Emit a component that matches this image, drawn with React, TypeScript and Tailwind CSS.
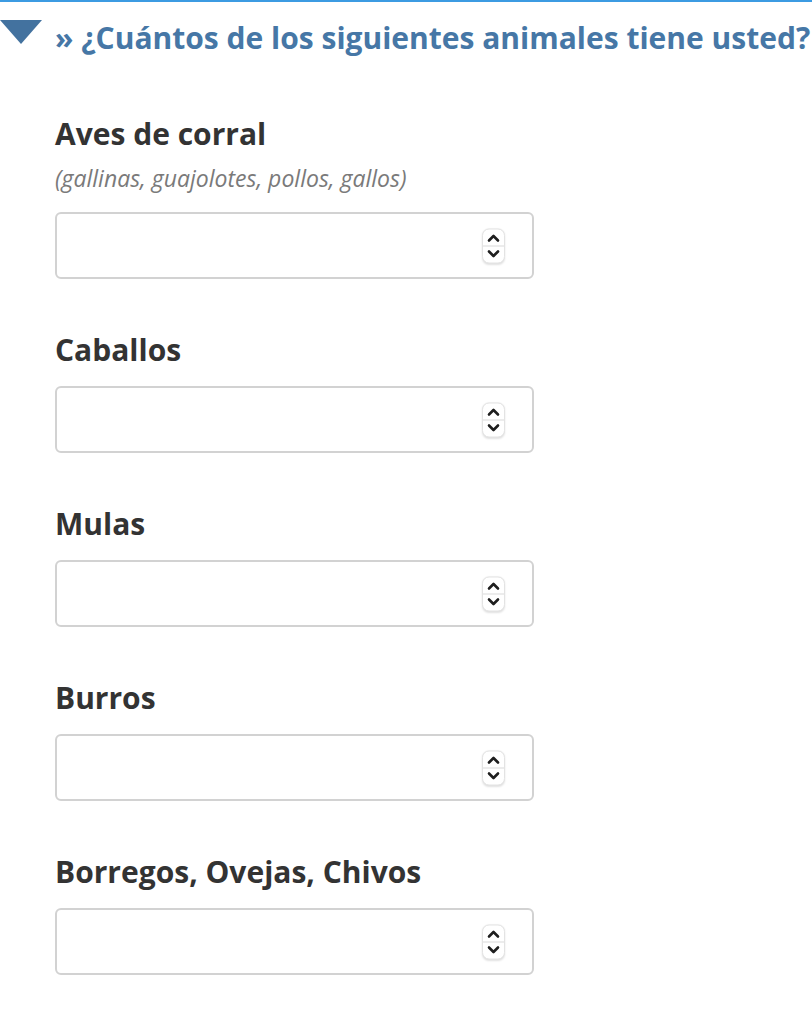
import React from 'react';

const Spinner: React.FC = () => (
  <div className="absolute right-[27px] top-1/2 -translate-y-1/2 flex h-[35px] w-[23px] flex-col overflow-hidden rounded-[7px] border border-[#e3e3e3] bg-white shadow-[0_1px_2px_rgba(0,0,0,0.12)]">
    <div className="flex flex-1 items-center justify-center border-b border-[#d9d9d9] pt-[1px]">
      <svg width="13" height="9" viewBox="0 0 13 9" fill="none">
        <path d="M2 7 L6.5 2.5 L11 7" stroke="#1e1e1e" strokeWidth="2.6" strokeLinecap="round" strokeLinejoin="round" />
      </svg>
    </div>
    <div className="flex flex-1 items-center justify-center pb-[1px]">
      <svg width="13" height="9" viewBox="0 0 13 9" fill="none">
        <path d="M2 2 L6.5 6.5 L11 2" stroke="#1e1e1e" strokeWidth="2.6" strokeLinecap="round" strokeLinejoin="round" />
      </svg>
    </div>
  </div>
);

const NumberField: React.FC = () => (
  <div className="relative h-[67px] w-[479px] rounded-[6px] border-2 border-[#d2d2d2] bg-white">
    <Spinner />
  </div>
);

const Question: React.FC<{ label: string; hint?: string }> = ({ label, hint }) => (
  <div className="flex flex-col">
    <h3 className="text-[30px] font-bold leading-[36px] text-[#333333]">{label}</h3>
    {hint && (
      <p className="mt-[12px] text-[23px] italic leading-[28px] text-[#7a7a7a]">{hint}</p>
    )}
    <div className={hint ? 'mt-[20px]' : 'mt-[18px]'}>
      <NumberField />
    </div>
  </div>
);

const animals = [
  { label: 'Aves de corral', hint: '(gallinas, guajolotes, pollos, gallos)' },
  { label: 'Caballos' },
  { label: 'Mulas' },
  { label: 'Burros' },
  { label: 'Borregos, Ovejas, Chivos' },
];

const App: React.FC = () => {
  return (
    <div className="min-h-screen bg-white font-['Open_Sans',sans-serif]">
      <div className="h-[2px] bg-[#3c9be2]" />
      <div className="flex items-start pt-[18px]">
        <svg width="42" height="24" viewBox="0 0 42 24" className="shrink-0">
          <polygon points="0,0 42,0 21,24" fill="#43729f" />
        </svg>
        <h2 className="ml-[13px] whitespace-nowrap text-[30px] font-bold leading-[36px] text-[#4677a6]">
          » ¿Cuántos de los siguientes animales tiene usted?
        </h2>
      </div>
      <div className="flex flex-col gap-[53px] pl-[55px] pt-[60px]">
        {animals.map((a) => (
          <Question key={a.label} label={a.label} hint={a.hint} />
        ))}
      </div>
    </div>
  );
};

export default App;
